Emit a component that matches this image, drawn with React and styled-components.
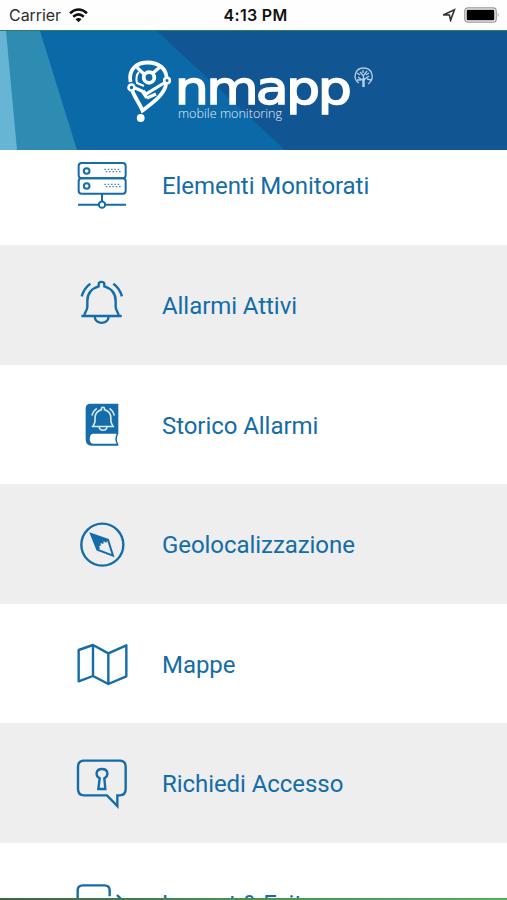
import React from "react";
import styled, { createGlobalStyle } from "styled-components";

const blue = "#146ca8";

const GlobalStyle = createGlobalStyle`
  * {
    box-sizing: border-box;
  }
  body {
    margin: 0;
    background: #fff;
    overflow: hidden;
  }
`;

const Screen = styled.div`
  display: flex;
  flex-direction: column;
  width: 507px;
  height: 900px;
  overflow: hidden;
  font-family: Roboto, "Liberation Sans", sans-serif;
`;

const StatusBar = styled.div`
  flex: none;
  display: grid;
  grid-template-columns: 1fr auto 1fr;
  align-items: center;
  height: 30px;
  padding: 0 7px 0 9px;
  background: #fefefe;
  font-family: Inter, "Liberation Sans", sans-serif;
  font-size: 16px;
  color: #2e2e2e;
`;

const Carrier = styled.div`
  display: flex;
  align-items: center;
  gap: 8px;
  letter-spacing: -0.05px;
`;

const Clock = styled.div`
  padding-left: 2px;
  color: #111;
  font-weight: 600;
  letter-spacing: 0.3px;
`;

const StatusIcons = styled.div`
  display: flex;
  align-items: center;
  justify-content: flex-end;
  gap: 8px;
`;

const Header = styled.header`
  flex: none;
  height: 120px;
  border-top: 1px solid #30796f;
`;

const HeaderArt = styled.svg`
  display: block;
`;

const Menu = styled.nav`
  flex: 1;
  min-height: 0;
  overflow: hidden;
`;

// the list is scrolled a little, the first row starts under the header
const MenuList = styled.div`
  display: flex;
  flex-direction: column;
  margin-top: -24.6px;
`;

const MenuItem = styled.div`
  display: flex;
  align-items: center;
  gap: 22px;
  height: 119.6px;
  padding-left: 65px;
  background: ${(props) => (props.$shaded ? "#eeeeee" : "#ffffff")};
`;

const MenuIcon = styled.svg`
  flex: none;
  width: 75px;
  height: 70px;
  fill: none;
  stroke: ${blue};
  stroke-width: 7.2px;
  overflow: visible;
`;

const Label = styled.span`
  padding-top: 2.4px;
  color: ${blue};
  font-size: 24px;
  line-height: 28px;
  letter-spacing: -0.06px;
  white-space: nowrap;
`;

const BottomEdge = styled.div`
  flex: none;
  height: 2px;
  background: linear-gradient(90deg, #39683d, #479452 50%, #55ad58);
`;

const ServerIcon = () => (
  <MenuIcon viewBox="0 0 225 210">
    <g strokeWidth="6">
      <rect x="41" y="39" width="141" height="46" rx="9" />
      <rect x="41" y="85" width="141" height="46" rx="9" />
      <circle cx="65" cy="63" r="8.5" />
      <circle cx="65" cy="108" r="8.5" />
      <path d="M111 131V154M39 164H101M122 164H183" />
      <circle cx="111" cy="164" r="9.5" />
    </g>
    <path
      d="M118 58H168M122 65H168M118 103H168M122 110H168"
      strokeWidth="4"
      strokeDasharray="5 5"
      opacity="0.75"
    />
  </MenuIcon>
);

const bellPath =
  "M50 138H171M59 137C59 126 68 123 68 110V93C68 70 79 56 102 49V43C102 33 119 33 119 43V49C142 56 153 70 153 93V110C153 123 162 126 162 137M90 140C92 165 130 165 132 140M51 79C56 62 64 50 77 41M172 79C167 62 159 50 146 41";

const BellIcon = () => (
  <MenuIcon viewBox="1 0 225 210">
    <path d={bellPath} />
  </MenuIcon>
);

const BookIcon = () => (
  <MenuIcon viewBox="0 -2 225 210">
    <path
      d="M76 42H160V132C154 143 154 155 160 162V168H80Q62 168 62 149V56Q62 42 76 42Z"
      fill={blue}
      stroke="none"
    />
    <path
      d="M84 132H155Q147 147 155 162H84C71 162 71 132 84 132Z"
      fill="#fff"
      stroke="none"
    />
    <path
      d={bellPath}
      transform="translate(52 33) scale(.56)"
      stroke="#d9edf7"
      strokeWidth="8.5"
    />
  </MenuIcon>
);

const CompassIcon = () => (
  <MenuIcon viewBox="1 -3 225 210">
    <circle cx="113" cy="104" r="63" />
    <path d="M79 72L130 89L145 137L98 119Z" strokeWidth="6" />
    <path
      d="M77 70L131 89L124 98L117 94L116 102L108 99V107L103 109L106 116L98 120Z"
      fill={blue}
      stroke="none"
    />
  </MenuIcon>
);

const MapIcon = () => (
  <MenuIcon viewBox="0 -4 225 210">
    <path
      d="M41 59L84 44L130 69L184 45V138L130 161L84 137L41 153ZM84 44V137M130 69V161"
      strokeLinejoin="round"
    />
  </MenuIcon>
);

const AccessIcon = () => (
  <MenuIcon viewBox="0 10 225 210">
    <path d="M57 48H164Q182 48 182 67V133Q182 152 164 152H157V184L126 152H57Q39 152 39 133V67Q39 48 57 48Z" />
    <path d="M104 101C89 92 93 73 111 73C129 73 133 92 118 101L121 133H100Z" />
  </MenuIcon>
);

const LogoutIcon = () => (
  <MenuIcon viewBox="0 0 225 210">
    <path d="M134 85V67Q134 52 118 52H54Q38 52 38 67V150Q38 165 54 165H118Q134 165 134 150V132M156 81L183 108L156 135M83 108H182" />
  </MenuIcon>
);

const items = [
  { label: "Elementi Monitorati", Icon: ServerIcon },
  { label: "Allarmi Attivi", Icon: BellIcon },
  { label: "Storico Allarmi", Icon: BookIcon },
  { label: "Geolocalizzazione", Icon: CompassIcon },
  { label: "Mappe", Icon: MapIcon },
  { label: "Richiedi Accesso", Icon: AccessIcon },
  { label: "Logout & Exit", Icon: LogoutIcon },
];

function Banner() {
  return (
    <HeaderArt width="507" height="119" viewBox="0 31 507 119">
      <rect y="31" width="507" height="119" fill="#125593" />
      <path d="M0 31H157L285 150H0Z" fill="#0b69a7" />
      <path d="M0 31H40L77 150H0Z" fill="#2e8bb1" />
      <path d="M0 31H6L17 150H0Z" fill="#66b5d5" />

      {/* pin */}
      <g fill="none" stroke="#fff" strokeWidth="3.8">
        <path d="M130.5 82C128 69 137 62.5 148 62.5C159 62.5 166 69 166.5 77M166 83C166 94 151 104 142.5 110.5C140 104 135 98 132.5 91" />
        <circle cx="149" cy="77.5" r="5.3" />
        <path
          d="M144 74L137 67.5M153 73L160 67M135 88L142 91L147 98M143 91L146 94L164 83M147 98L156 94"
          strokeWidth="3.2"
        />
        <path d="M139 72C136 75 136 79 137 83L144 86" strokeWidth="2" />
        <circle cx="131.5" cy="87.5" r="3" strokeWidth="2.6" />
        <circle cx="167" cy="80.5" r="2.8" strokeWidth="2.6" />
      </g>
      <circle cx="140.7" cy="118" r="3.9" fill="#fff" />

      <text
        transform="scale(1.17 1)"
        x="149.3 176.3 218.5 244.5 271.6"
        y="104.5"
        fontFamily="DejaVu Sans, sans-serif"
        fontSize="46"
        fill="#fff"
        stroke="#fff"
        strokeWidth="1.5"
      >
        nmapp
      </text>
      <text
        x="178"
        y="118"
        textLength="104"
        lengthAdjust="spacingAndGlyphs"
        fontFamily="Open Sans, sans-serif"
        fontWeight="300"
        fontSize="13"
        fill="#e2eff8"
      >
        mobile monitoring
      </text>

      {/* tree */}
      <g fill="none" stroke="#b5d0e5" strokeWidth="1.3">
        <path d="M359 83C352 79 355 68 363.5 68C373 68 375 79 368 84" />
        <path d="M363.5 87V75M363.5 81L358 77M363.5 80L369 76M363.5 76L360 72M364 75L367 71M357 73L360 75M367 79L371 80M357 80L361 80M363 70V73M369 73L366 75" />
        <path d="M363.5 78V87" strokeWidth="2.4" />
      </g>
    </HeaderArt>
  );
}

export default function App() {
  return (
    <>
      <GlobalStyle />
      <Screen>
        <StatusBar>
          <Carrier>
            Carrier
            <svg width="19" height="15" viewBox="0 0 19 15">
              <g fill="none" stroke="#111" strokeWidth="2.5">
                <path d="M1 5.3Q9.5 -2.2 18 5.3" />
                <path d="M4.2 8.8Q9.5 4 14.8 8.8" />
              </g>
              <path d="M6.5 11.2Q9.5 8.7 12.5 11.2L9.5 14.3Z" fill="#111" />
            </svg>
          </Carrier>
          <Clock>4:13 PM</Clock>
          <StatusIcons>
            <svg width="14" height="14" viewBox="0 0 14 14">
              <path
                d="M1.2 6.9L12.4 1.7L8.6 12.3L7.4 7Z"
                fill="none"
                stroke="#333"
                strokeWidth="1.6"
              />
            </svg>
            <svg width="36" height="16" viewBox="0 0 36 16">
              <rect x="0.8" y="0.8" width="31.4" height="14.4" rx="3.2" fill="#fff" stroke="#999" strokeWidth="1.3" />
              <rect x="2.7" y="2.7" width="27.6" height="10.6" rx="1" fill="#000" />
              <path d="M33.8 5.5Q35.5 8 33.8 10.5Z" fill="#888" />
            </svg>
          </StatusIcons>
        </StatusBar>
        <Header>
          <Banner />
        </Header>
        <Menu>
          <MenuList>
            {items.map(({ label, Icon }, i) => (
              <MenuItem key={label} $shaded={i % 2 === 1}>
                <Icon />
                <Label>{label}</Label>
              </MenuItem>
            ))}
          </MenuList>
        </Menu>
        <BottomEdge />
      </Screen>
    </>
  );
}
